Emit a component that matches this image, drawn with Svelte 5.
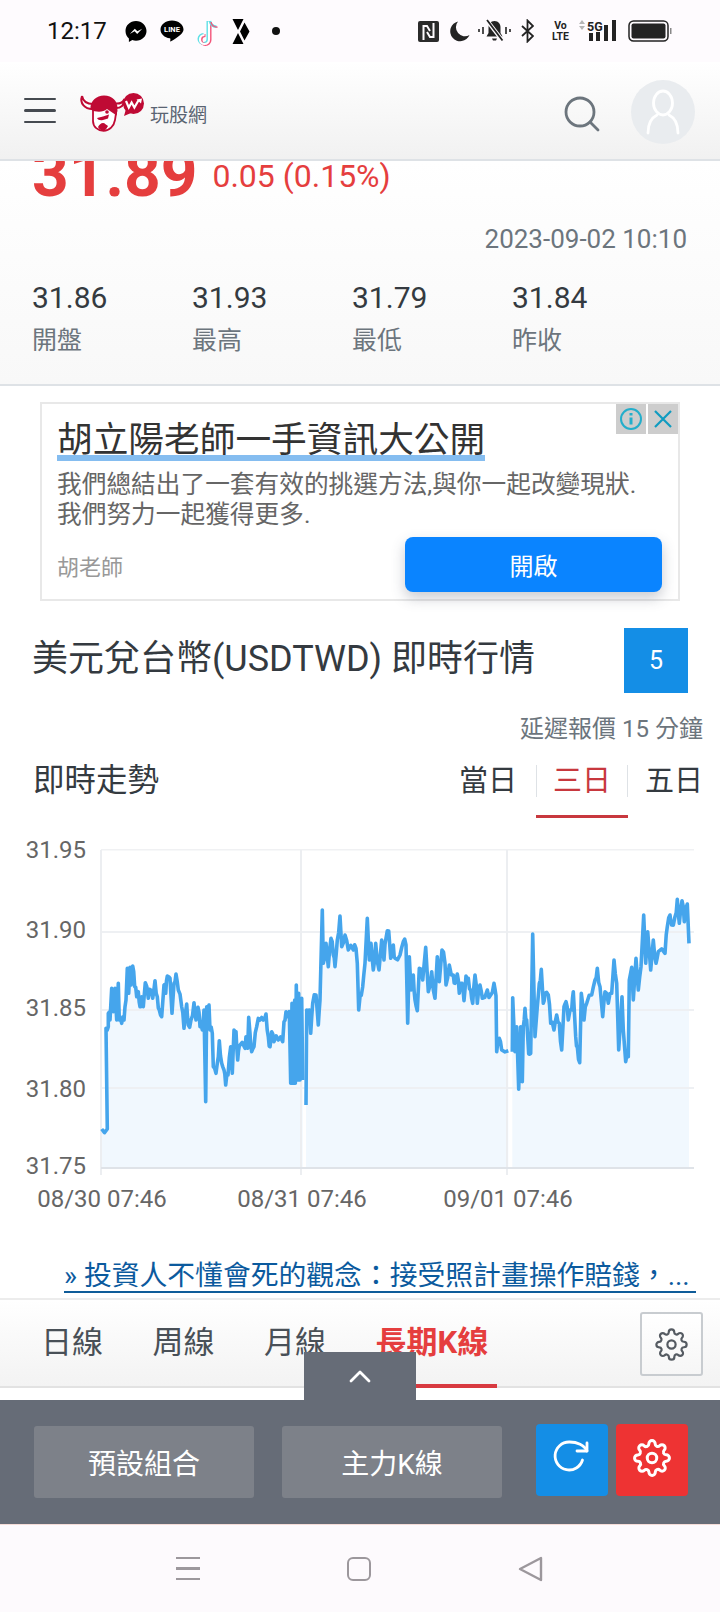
<script>
  // chart points read off the reference, in 3x crop coordinates (x / 3, 830 + y / 3)
  const seg1 = [305,897,322,897,318,595,325,590,325,550,330,570,335,475,340,545,345,475,350,570,355,460,358,570,365,580,372,570,378,510,382,415,386,490,390,412,393,465,398,408,404,470,410,500,415,485,420,530,425,500,430,530,436,458,445,505,452,480,458,505,465,452,472,500,478,540,485,560,492,465,497,490,502,438,510,445,516,550,522,460,528,432,535,480,545,530,552,595,560,522,565,585,573,570,582,518,588,570,594,532,600,590,607,600,612,540,617,815,620,530,627,525,630,600,637,610,640,710,648,730,652,700,658,632,665,700,672,720,677,765,684,735,692,650,697,730,702,600,708,605,713,690,718,648,735,655,738,620,743,655,746,562,750,610,755,665,762,650,770,590,780,570,790,570,798,552,805,620,810,650,815,605,822,635,835,630,848,635,852,575,858,545,868,545,872,760,876,520,880,760,884,510,886,760,889,465,893,750,896,490,900,750,905,505,908,750];
  const seg2 = [918,825,920,540,928,540,932,610,938,520,948,495,955,585,960,510,967,240,970,400,978,340,985,410,993,325,1000,375,1005,410,1012,330,1020,258,1025,350,1035,315,1045,360,1060,360,1068,355,1072,400,1076,540,1080,500,1088,470,1095,400,1102,265,1108,390,1113,340,1120,420,1127,340,1137,420,1145,330,1152,390,1158,325,1166,303,1172,385,1180,345,1185,385,1200,375,1210,335,1218,345,1223,580,1228,380,1233,480,1240,435,1245,510,1252,542,1258,415,1268,450,1277,352,1285,485,1295,425,1305,505,1312,380,1318,455,1326,360,1335,400,1338,465,1348,405,1360,435,1365,460,1372,432,1378,490,1386,460,1392,512,1398,438,1405,445,1412,480,1418,520,1425,435,1432,520,1440,465,1447,505,1462,480,1472,495,1482,460,1488,497,1490,665,1498,625,1505,660,1525,662];
  const seg3 = [1537,665,1538,503,1545,665,1550,590,1556,778,1562,590,1567,755,1570,590,1575,535,1580,570,1586,672,1592,670,1598,312,1605,620,1612,530,1618,460,1624,418,1630,520,1635,490,1645,495,1652,580,1662,600,1670,555,1678,580,1685,660,1692,530,1698,515,1705,570,1715,540,1720,485,1727,620,1732,650,1739,698,1744,490,1752,570,1760,520,1775,495,1785,450,1792,415,1800,470,1808,560,1815,485,1825,520,1835,490,1842,390,1850,460,1856,660,1866,500,1870,600,1877,695,1885,680,1888,450,1895,412,1900,510,1908,385,1915,480,1923,410,1931,255,1937,400,1943,305,1952,420,1960,330,1968,400,1975,365,1995,370,2002,290,2010,255,2015,285,2025,260,2032,208,2038,280,2046,212,2053,275,2062,222,2067,340];

  const chartTop = 830;
  function toPts(a) {
    let out = [];
    for (let i = 0; i < a.length; i += 2) {
      const x = a[i] / 3;
      const y = 830 + a[i + 1] / 3 - chartTop;
      if (i > 0) {
        // the real series is far denser than what can be read off: wiggle between the read points
        const px = a[i - 2] / 3;
        const py = 830 + a[i - 1] / 3 - chartTop;
        if (x - px > 1.5 && Math.abs(y - py) < 30) {
          const wig = Math.sin(i * 12.9898) * 5;
          out.push([+((x + px) / 2).toFixed(1), +((y + py) / 2 + wig).toFixed(1)]);
        }
      }
      out.push([+x.toFixed(1), +y.toFixed(1)]);
    }
    return out;
  }
  const baseY = 1168 - chartTop;
  const series = [seg1, seg2, seg3].map((s) => {
    const p = toPts(s);
    const line = p.map((q) => q.join(",")).join(" ");
    const area = `${p[0][0]},${baseY} ${line} ${p[p.length - 1][0]},${baseY}`;
    return { line, area };
  });

  const yTicks = [
    { label: "31.95", y: 20, text: 28 },
    { label: "31.90", y: 102, text: 108 },
    { label: "31.85", y: 180, text: 186 },
    { label: "31.80", y: 258, text: 267 },
    { label: "31.75", y: 338, text: 344 }
  ];
  const xTicks = [
    { label: "08/30 07:46", x: 101, tx: 102 },
    { label: "08/31 07:46", x: 301, tx: 302 },
    { label: "09/01 07:46", x: 507, tx: 508 }
  ];
  const stats = [
    { v: "31.86", l: "開盤" },
    { v: "31.93", l: "最高" },
    { v: "31.79", l: "最低" },
    { v: "31.84", l: "昨收" }
  ];
</script>

{#snippet gear(size, color, sw)}
  <svg width={size} height={size} viewBox="0 0 24 24" fill="none" stroke={color} stroke-width={sw} stroke-linecap="round" stroke-linejoin="round">
    <circle cx="12" cy="12" r="3"></circle>
    <path d="M19.4 15a1.65 1.65 0 0 0 .33 1.82l.06.06a2 2 0 0 1 0 2.83 2 2 0 0 1-2.83 0l-.06-.06a1.65 1.65 0 0 0-1.82-.33 1.65 1.65 0 0 0-1 1.51V21a2 2 0 0 1-2 2 2 2 0 0 1-2-2v-.09A1.65 1.65 0 0 0 9 19.4a1.65 1.65 0 0 0-1.82.33l-.06.06a2 2 0 0 1-2.83 0 2 2 0 0 1 0-2.83l.06-.06a1.65 1.65 0 0 0 .33-1.82 1.65 1.65 0 0 0-1.51-1H3a2 2 0 0 1-2-2 2 2 0 0 1 2-2h.09A1.65 1.65 0 0 0 4.6 9a1.65 1.65 0 0 0-.33-1.82l-.06-.06a2 2 0 0 1 0-2.83 2 2 0 0 1 2.83 0l.06.06a1.65 1.65 0 0 0 1.82.33H9a1.65 1.65 0 0 0 1-1.51V3a2 2 0 0 1 2-2 2 2 0 0 1 2 2v.09a1.65 1.65 0 0 0 1 1.51 1.65 1.65 0 0 0 1.82-.33l.06-.06a2 2 0 0 1 2.83 0 2 2 0 0 1 0 2.83l-.06.06a1.65 1.65 0 0 0-.33 1.82V9a1.65 1.65 0 0 0 1.51 1H21a2 2 0 0 1 2 2 2 2 0 0 1-2 2h-.09a1.65 1.65 0 0 0-1.51 1z"></path>
  </svg>
{/snippet}

<div class="page">
  <!-- status bar -->
  <div class="status">
    <div class="st-left">
      <span class="time">12:17</span>
      <svg class="ic-msg" width="22" height="24" viewBox="0 0 22 24">
        <path d="M11 2C5 2 .5 6.4.5 12c0 3 1.3 5.6 3.4 7.4V23l3.4-1.9c1.1.4 2.4.6 3.7.6 6 0 10.500-4.400 10.500-9.700S17 2 11 2z" fill="#000"/>
        <path d="M4.800 15l5-5.300 2.600 2.600 4.800-2.600-5 5.300-2.600-2.700z" fill="#fff"/>
      </svg>
      <svg class="ic-line" width="24" height="24" viewBox="0 0 24 24">
        <path d="M12 1.500C5.600 1.500.5 5.500.5 10.500c0 4.500 4 8.100 9.300 8.800.9.200.6 1.400.4 2.600-.1.700.6.600 1.300.2 2-1.100 6-3.700 8.700-6.100 2-1.700 3.300-3.600 3.300-5.500 0-5-5.100-9-11.500-9z" fill="#000"/>
        <text x="12" y="13" text-anchor="middle" font-family="Roboto, sans-serif" font-size="7.500" font-weight="700" fill="#fff">LINE</text>
      </svg>
      <svg class="ic-tt" width="22" height="28" viewBox="0 0 22 28" fill="none">
        <path d="M11 2v18a4.500 4.500 0 1 1-4.500-4.500" stroke="#5fe0e6" stroke-width="3"/>
        <path d="M13 3v18a4.500 4.500 0 1 1-4.500-4.500" stroke="#f3557a" stroke-width="3"/>
        <path d="M12 2.500v18a4.500 4.500 0 1 1-4.500-4.500" stroke="#fff" stroke-width="2.200"/>
        <path d="M13 2c.5 3 3 5.500 6.500 5.800" stroke="#5fe0e6" stroke-width="2.500"/>
        <path d="M14 3c.5 3 3 5 6.500 5.300" stroke="#f3557a" stroke-width="1.500"/>
      </svg>
      <svg class="ic-x" width="18" height="25" viewBox="0 0 18 25">
        <path d="M.5 0h11l-5.500 11zM.5 25h11L6 14zM8 12.500L12.500 3.500l5 9-5 9z" fill="#000"/>
      </svg>
      <span class="dot"></span>
    </div>
    <div class="st-right">
      <svg class="r-nfc" width="21" height="21" viewBox="0 0 21 21">
        <rect width="21" height="21" rx="2" fill="#2b2b2b"/>
        <path d="M5.500 19V5h3.500l3 5M15.500 2v14H12l-3-5" fill="none" stroke="#fefbfe" stroke-width="2"/>
      </svg>
      <svg class="r-moon" width="21" height="21" viewBox="0 0 21 21">
        <path d="M9 0.500a10 10 0 1 0 11.500 13.500A9 9 0 0 1 9 .500z" fill="#232323"/>
      </svg>
      <svg class="r-bell" width="33" height="24" viewBox="0 0 33 24">
        <path d="M16.500 2c4 0 6 3 6 6.500V14l2 3.500h-16l2-3.500V8.500c0-3.500 2-6.500 6-6.500z" fill="#232323"/>
        <path d="M14 19.500h5l-1 2h-3z" fill="#232323"/>
        <path d="M9 1.500L24 21" stroke="#fefbfe" stroke-width="4"/>
        <path d="M9 1L24.500 21.500" stroke="#232323" stroke-width="1.800"/>
        <path d="M1 10v3M5 8v7M28 8v7M32 10v3" stroke="#232323" stroke-width="1.600"/>
      </svg>
      <svg class="r-bt" width="13" height="24" viewBox="0 0 13 24" fill="none">
        <path d="M1 7l11 10-5.500 5.500V1.500L12 7 1 17" stroke="#232323" stroke-width="1.800"/>
      </svg>
      <span class="volte"><b>Vo</b><b>LTE</b></span>
      <svg class="r-sig" width="42" height="24" viewBox="0 0 42 24">
        <path d="M2 5l3-4 3 4zM2 7h6l-3 4z" fill="#b5b5b5"/>
        <text x="10" y="11.500" font-family="Roboto, sans-serif" font-size="12.500" font-weight="700" fill="#232323">5G</text>
        <rect x="12" y="14" width="4" height="8" fill="#232323"/>
        <rect x="19" y="13" width="4" height="9" fill="#232323"/>
        <rect x="27" y="6" width="4" height="16" fill="#232323"/>
        <rect x="35" y="1" width="4" height="21" fill="#232323"/>
      </svg>
      <svg class="r-bat" width="44" height="22" viewBox="0 0 44 22">
        <rect x="1" y="1" width="39" height="20" rx="4.500" fill="none" stroke="#232323" stroke-width="1.500"/>
        <rect x="3.500" y="3.500" width="34" height="15" rx="2" fill="#232323"/>
        <rect x="42" y="8" width="1.500" height="6" fill="#888"/>
      </svg>
    </div>
  </div>

  <!-- site header -->
  <header class="head">
    <div class="burger"><span></span><span></span><span></span></div>
    <svg class="logo" width="66" height="42" viewBox="79 92 66 42">
      <!-- horns -->
      <path d="M82 98c-2.500 7 2.500 13 10.500 13 M82 98c1 5 5 8 11 8" fill="#fff" stroke="#bf0a34" stroke-width="2"/>
      <path d="M124.500 101c.5 6-4 9.500-9.500 9 M124.500 101c-1.500 3.500-5 5-9.500 4.500" fill="#fff" stroke="#bf0a34" stroke-width="2"/>
      <!-- face -->
      <path d="M93 112v11c0 6 5 9.800 10.500 9.800 6 0 10.500-4.800 11.500-10.800l1.500-10" fill="#fff" stroke="#bf0a34" stroke-width="1.800"/>
      <!-- hair -->
      <path d="M90.500 111c-.5-8 6-13.500 13.500-13.500 8.500 0 13.500 5.500 13.500 13l-.8 7-9.700-6.500c-4 3.500-11 3.500-16.500.5z" fill="#bf0a34"/>
      <circle cx="107" cy="114" r="1.800" fill="#bf0a34"/>
      <path d="M97 120l6-1.500 6-2-1 4-5 1.500c-3 .5-5 0-6-2z" fill="#bf0a34"/>
      <path d="M98 129c1-2 3-4 5-4 2 0 3 2 5 3-1.500 3-3 4.500-5 4.500s-4-1.500-5-3.500z" fill="#bf0a34"/>
      <!-- bubble -->
      <circle cx="133.500" cy="105.500" r="10.500" fill="#bf0a34"/>
      <path d="M124 118l2-7 5 4z" fill="#bf0a34"/>
      <path d="M126 103l2.800 6.500 2.800-5 2.800 5 4-7" fill="none" stroke="#fff" stroke-width="2.200"/>
      <path d="M136.500 101.500l5.500-1-1 5z" fill="#fff"/>
    </svg>
    <span class="brand">玩股網</span>
    <svg class="search" width="36" height="36" viewBox="0 0 36 36" fill="none" stroke="#6c757d" stroke-width="2.800" stroke-linecap="round">
      <circle cx="16" cy="16" r="14"></circle>
      <path d="M26 26l8 8"></path>
    </svg>
    <div class="avatar">
      <svg width="34" height="46" viewBox="0 0 34 46" fill="none" stroke="#fff" stroke-width="2.800" stroke-linecap="round">
        <ellipse cx="17" cy="14" rx="9.500" ry="12"></ellipse>
        <path d="M2 44c0-11 5-16 9-18M32 44c0-11-5-16-9-18"></path>
      </svg>
    </div>
  </header>

  <!-- quote -->
  <section class="quote">
    <div class="price-row">
      <span class="price">31.89</span>
      <span class="change">0.05 (0.15%)</span>
    </div>
    <div class="date">2023-09-02 10:10</div>
    <div class="stats">
      {#each stats as s}
        <div class="stat">
          <div class="val">{s.v}</div>
          <div class="lab">{s.l}</div>
        </div>
      {/each}
    </div>
  </section>

  <!-- ad -->
  <div class="ad-wrap">
    <div class="ad">
      <div class="ad-close">
        <span class="ad-i">
          <svg width="24" height="24" viewBox="0 0 24 24" fill="none" stroke="#23aecb" stroke-width="2">
            <circle cx="12" cy="12" r="10"></circle>
            <path d="M12 10.500v7" stroke-width="3"></path>
            <path d="M12 6v2.500" stroke-width="3"></path>
          </svg>
        </span>
        <span class="ad-i">
          <svg width="22" height="22" viewBox="0 0 22 22" fill="none" stroke="#0f9bc0" stroke-width="2.200">
            <path d="M3 3l16 16M19 3L3 19"></path>
          </svg>
        </span>
      </div>
      <div class="ad-title"><span>胡立陽老師一手資訊大公開</span></div>
      <div class="ad-body">我們總結出了一套有效的挑選方法,與你一起改變現狀.<br />我們努力一起獲得更多.</div>
      <div class="ad-foot">
        <span class="ad-by">胡老師</span>
        <span class="ad-btn">開啟</span>
      </div>
    </div>
  </div>

  <!-- market -->
  <div class="title-row">
    <h2>美元兌台幣(USDTWD) 即時行情</h2>
    <span class="count">5</span>
  </div>
  <div class="delay">延遲報價 15 分鐘</div>
  <div class="trend-row">
    <span class="trend">即時走勢</span>
    <div class="ranges">
      <span class="rng">當日</span>
      <span class="rng on">三日</span>
      <span class="rng">五日</span>
    </div>
  </div>

  <svg class="chart" width="720" height="382" viewBox="0 0 720 382">
    <rect x="101" y="19" width="593" height="1.500" fill="#f0f1f3"/>
    {#each series as s}
      <polygon points={s.area} fill="#f1f8fe"/>
    {/each}
    {#each yTicks.slice(1, 4) as t}
      <rect x="101" y={t.y - 1} width="593" height="2" fill="#eef0f3"/>
    {/each}
    {#each xTicks as t}
      <rect x={t.x - 1} y="20" width="2" height="325" fill="#eceef1"/>
    {/each}
    <rect x="101" y={baseY - 1} width="593" height="2" fill="#dfe3e8"/>
    {#each series as s}
      <polyline points={s.line} fill="none" stroke="#45a5ec" stroke-width="3.600" stroke-linejoin="round"/>
    {/each}
    {#each yTicks as t}
      <text x="86" y={t.text} text-anchor="end" class="axis">{t.label}</text>
    {/each}
    {#each xTicks as t}
      <text x={t.tx} y="377" text-anchor="middle" class="axis">{t.label}</text>
    {/each}
  </svg>

  <div class="news"><span>» 投資人不懂會死的觀念：接受照計畫操作賠錢，...</span></div>

  <div class="ktabs">
    <span class="kt">日線</span>
    <span class="kt">周線</span>
    <span class="kt">月線</span>
    <span class="kt active">長期K線</span>
    <span class="kgear">{@render gear(33, "#555b62", 1.6)}</span>
  </div>

  <!-- bottom toolbar -->
  <div class="spacer"></div>
  <div class="tools">
    <div class="pull">
      <svg width="22" height="14" viewBox="0 0 22 14" fill="none" stroke="#fff" stroke-width="2.800" stroke-linecap="round" stroke-linejoin="round">
        <path d="M2 12l9-9 9 9"></path>
      </svg>
    </div>
    <span class="tbtn">預設組合</span>
    <span class="tbtn">主力K線</span>
    <span class="sq blue">
      <svg width="44" height="44" viewBox="0 0 44 44" fill="none" stroke="#fff" stroke-width="2.800" stroke-linecap="round" stroke-linejoin="round">
        <path d="M37 7v8H27"></path>
        <path d="M37 15C34.500 9 27 5.800 19 6A14 14 0 1 0 32.500 24"></path>
      </svg>
    </span>
    <span class="sq red">{@render gear(38, "#fff", 1.9)}</span>
  </div>

  <!-- android nav -->
  <nav class="nav">
    <span class="n-menu"><i></i><i></i><i></i></span>
    <span class="n-home"></span>
    <svg width="26" height="26" viewBox="0 0 26 26" fill="none" stroke="#9c979c" stroke-width="2.400" stroke-linejoin="round">
      <path d="M23 2v22L2 13z"></path>
    </svg>
  </nav>
</div>

<style>
  :global(body) {
    margin: 0;
    background: #fff;
  }
  .page {
    width: 720px;
    height: 1612px;
    overflow: hidden;
    font-family: Roboto, "Noto Sans CJK TC", sans-serif;
    color: #343a40;
    position: relative;
  }

  /* status bar */
  .status {
    height: 62px;
    background: #fefbfe;
    display: flex;
    align-items: center;
    justify-content: space-between;
    padding: 0 48px 0 47px;
    box-sizing: border-box;
  }
  .st-left,
  .st-right {
    display: flex;
    align-items: center;
  }
  .time {
    font-size: 24px;
    color: #111;
    width: 78px;
  }
  .ic-line {
    margin-left: 13px;
  }
  .ic-tt {
    margin-left: 13px;
    margin-top: 3px;
  }
  .ic-x {
    margin-left: 13px;
  }
  .dot {
    width: 8px;
    height: 8px;
    border-radius: 50%;
    background: #111;
    margin-left: 22px;
  }
  .r-moon {
    margin-left: 10px;
  }
  .r-bell {
    margin-left: 8px;
  }
  .r-bt {
    margin-left: 10px;
  }
  .volte {
    display: flex;
    flex-direction: column;
    align-items: center;
    font-size: 10.5px;
    line-height: 11px;
    color: #232323;
    margin-left: 17px;
    width: 19px;
  }
  .r-sig {
    margin-left: 7px;
  }
  .r-bat {
    margin-left: 9px;
  }

  /* header */
  .head {
    height: 99px;
    box-sizing: border-box;
    border-bottom: 2px solid #dee2e6;
    background: linear-gradient(#fff, #f1f1f1);
    display: flex;
    align-items: center;
    padding: 0 24px;
    position: relative;
    z-index: 2;
  }
  .burger {
    width: 32px;
    display: flex;
    flex-direction: column;
    gap: 9px;
  }
  .burger span {
    height: 2.5px;
    background: #454a50;
    border-radius: 2px;
  }
  .logo {
    margin-left: 23px;
  }
  .brand {
    font-size: 19px;
    color: #5a6472;
    margin-left: 5px;
    margin-top: 6px;
  }
  .search {
    margin-left: auto;
    margin-top: 6px;
  }
  .avatar {
    width: 64px;
    height: 64px;
    border-radius: 50%;
    background: #e9ecef;
    margin-left: 31px;
    margin-right: 1px;
    margin-top: 2px;
    display: flex;
    align-items: center;
    justify-content: center;
    flex-shrink: 0;
  }

  /* quote */
  .quote {
    display: flow-root;
    height: 225px;
    box-sizing: border-box;
    border-bottom: 2px solid #dee2e6;
    background: linear-gradient(#fff, #f8f8f8);
    padding: 0 32px;
  }
  .price-row {
    display: flex;
    align-items: baseline;
    margin-top: -18px;
    height: 64px;
  }
  .price {
    font-size: 64px;
    line-height: 64px;
    font-weight: 700;
    color: #e53e3e;
  }
  .change {
    font-size: 32px;
    color: #e53e3e;
    margin-left: 15px;
    position: relative;
    top: -9px;
  }
  .date {
    text-align: right;
    font-size: 26px;
    line-height: 32px;
    color: #6c757d;
    margin-top: 16px;
    padding-right: 1px;
  }
  .stats {
    display: grid;
    grid-template-columns: repeat(4, 160px);
    margin-top: 25px;
  }
  .val {
    font-size: 30px;
    line-height: 36px;
  }
  .lab {
    font-size: 25px;
    line-height: 36px;
    color: #6c757d;
    margin-top: 7px;
  }

  /* ad */
  .ad-wrap {
    padding: 16px 40px 0;
  }
  .ad {
    height: 199px;
    box-sizing: border-box;
    border: 2px solid #e8e8e8;
    padding: 0 15px;
    position: relative;
  }
  .ad-close {
    position: absolute;
    top: 0;
    right: 0;
    display: flex;
    gap: 2px;
  }
  .ad-i {
    width: 30px;
    height: 30px;
    background: #cdcdcd;
    display: flex;
    align-items: center;
    justify-content: center;
  }
  .ad-title {
    font-size: 35.7px;
    line-height: 50px;
    color: #333;
    margin-top: 11px;
    height: 48px;
  }
  .ad-title span {
    display: inline-block;
    height: 40px;
    border-bottom: 6px solid #85bdf0;
    white-space: nowrap;
  }
  .ad-body {
    font-size: 24.7px;
    line-height: 30px;
    color: #666;
    margin-top: 7px;
    white-space: nowrap;
  }
  .ad-foot {
    display: flex;
    align-items: center;
    justify-content: space-between;
    margin-top: 7px;
  }
  .ad-by {
    font-size: 22px;
    color: #999;
  }
  .ad-btn {
    width: 257px;
    height: 55px;
    background: #0a84ff;
    color: #fff;
    font-size: 24px;
    border-radius: 8px;
    display: flex;
    align-items: center;
    justify-content: center;
    margin-right: 1px;
    box-shadow: 0 6px 14px rgba(60, 70, 90, 0.28);
  }

  /* market titles */
  .title-row {
    display: flex;
    align-items: center;
    justify-content: space-between;
    padding: 27px 32px 0 32px;
  }
  h2 {
    margin: 0 0 12px;
    font-size: 36px;
    font-weight: 400;
    color: #343a40;
    white-space: nowrap;
  }
  .count {
    width: 64px;
    height: 65px;
    background: #148ee6;
    color: #fff;
    font-size: 25px;
    display: flex;
    align-items: center;
    justify-content: center;
  }
  .delay {
    text-align: right;
    font-size: 24px;
    line-height: 32px;
    color: #6c757d;
    padding-right: 17px;
    margin-top: 20px;
    height: 31px;
  }
  .trend-row {
    display: flex;
    justify-content: space-between;
    align-items: flex-start;
    padding: 14px 17px 0 33px;
  }
  .trend {
    font-size: 31.5px;
    line-height: 46px;
  }
  .ranges {
    display: flex;
  }
  .rng {
    font-size: 29px;
    line-height: 46px;
    height: 60px;
    width: 92px;
    text-align: center;
    color: #343a40;
    box-sizing: border-box;
  }
  .rng:first-child {
    width: 92px;
    text-align: right;
    padding-right: 19px;
  }
  .rng.on {
    color: #c8383e;
    border-bottom: 3px solid #c8383e;
    position: relative;
  }
  .rng.on::before,
  .rng.on::after {
    content: "";
    position: absolute;
    top: 7px;
    height: 32px;
    width: 1px;
    background: #dee2e6;
  }
  .rng.on::before {
    left: 0;
  }
  .rng.on::after {
    right: 0;
  }
  .rng:last-child {
    text-align: right;
    width: 75px;
  }

  .chart {
    display: block;
    margin-top: 12px;
  }
  .axis {
    font-family: Roboto, sans-serif;
    font-size: 24px;
    fill: #666;
  }

  .news {
    padding: 0 24px 0 64px;
    margin-top: 47px;
  }
  .news span {
    display: block;
    font-size: 27.8px;
    line-height: 32px;
    color: #0b5a9e;
    border-bottom: 2px solid #0f5c99;
    white-space: nowrap;
    overflow: hidden;
    padding-top: 1px;
    height: 31px;
  }

  /* k tabs */
  .ktabs {
    height: 90px;
    box-sizing: border-box;
    margin-top: 5px;
    border-top: 2px solid #ececec;
    border-bottom: 2px solid #e2e2e2;
    background: linear-gradient(#fff, #f3f3f3);
    display: flex;
    padding-left: 26px;
    position: relative;
  }
  .kt {
    font-size: 31px;
    line-height: 86px;
    height: 88px;
    padding: 0 15px;
    margin-right: 19.5px;
    box-sizing: border-box;
    color: #495057;
  }
  .kt.active {
    font-weight: 700;
    color: #e53e3e;
    border-bottom: 4px solid #d83a40;
    margin-right: 0;
    padding: 0 9px 0 15px;
  }
  .kgear {
    position: absolute;
    left: 640px;
    top: 12px;
    width: 63px;
    height: 64px;
    box-sizing: border-box;
    border: 2px solid #c8ccd0;
    border-radius: 3px;
    background: linear-gradient(#fff, #f6f6f6);
    display: flex;
    align-items: center;
    justify-content: center;
  }

  .spacer {
    height: 12px;
  }

  /* toolbar */
  .tools {
    height: 124px;
    background: #666c77;
    position: relative;
    display: flex;
    align-items: flex-start;
    padding: 26px 32px 0 34px;
    box-sizing: border-box;
  }
  .pull {
    position: absolute;
    left: 304px;
    top: -48px;
    width: 112px;
    height: 48px;
    background: #666c77;
    display: flex;
    align-items: center;
    justify-content: center;
  }
  .tbtn {
    width: 220px;
    height: 72px;
    background: #7d8189;
    border-radius: 3px;
    color: #fff;
    font-size: 28px;
    display: flex;
    align-items: center;
    justify-content: center;
    margin-right: 28px;
  }
  .sq {
    width: 72px;
    height: 72px;
    margin-top: -2px;
    border-radius: 4px;
    display: flex;
    align-items: center;
    justify-content: center;
  }
  .sq svg {
    margin-bottom: 4px;
  }
  .blue {
    background: #148ee6;
    margin-left: 6px;
  }
  .red {
    background: #ee3333;
    margin-left: 8px;
  }

  /* android nav */
  .nav {
    height: 88px;
    background: #fdfafd;
    border-top: 1px solid #f5dcd8;
    box-sizing: border-box;
    display: grid;
    grid-template-columns: 24px 24px 26px;
    justify-content: space-between;
    align-items: center;
    padding: 0 176px;
  }
  .n-menu {
    display: flex;
    flex-direction: column;
    gap: 8px;
  }
  .n-menu i {
    display: block;
    height: 2.5px;
    background: #9c979c;
  }
  .n-home {
    width: 24px;
    height: 24px;
    box-sizing: border-box;
    border: 2.5px solid #9c979c;
    border-radius: 6px;
  }
</style>
